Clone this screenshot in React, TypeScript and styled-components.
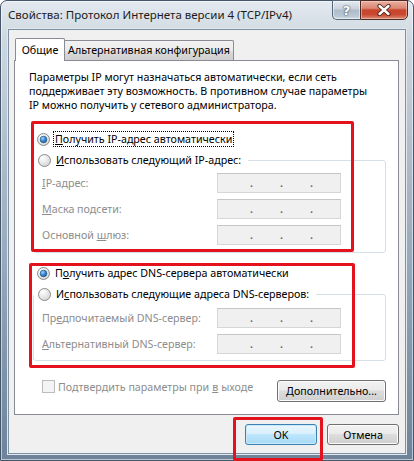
import React from 'react';
import styled, { createGlobalStyle } from 'styled-components';

const GlobalStyle = createGlobalStyle`
  html, body {
    margin: 0;
    padding: 0;
    background: #ffffff;
  }

  body {
    font-family: 'Noto Sans', 'Open Sans', sans-serif;
    font-size: 10.7px;
    color: #000000;
  }

  * {
    box-sizing: border-box;
  }
`;

const Window = styled.div`
  width: 414px;
  height: 461px;
  display: flex;
  flex-direction: column;
  padding: 0 7px 6px 7px;
  border: 1px solid #44566a;
  border-radius: 7px 7px 0 0;
  background: linear-gradient(180deg, #e3e9ef 0%, #cfd8e1 8%, #b2c0ce 30%, #8ea1b5 65%, #6e8399 100%);
  box-shadow: inset 0 0 0 1px rgba(255, 255, 255, 0.55);
`;

const TitleBar = styled.div`
  height: 28px;
  display: flex;
  align-items: flex-start;
  flex-shrink: 0;
`;

const Title = styled.div`
  margin-top: 6px;
  line-height: 16px;
  font-size: 11.5px;
  color: #1b1b1b;
  white-space: nowrap;
`;

const CaptionButtons = styled.div`
  margin-left: auto;
  margin-top: -1px;
  margin-right: -2px;
  display: flex;
`;

const HelpButton = styled.div`
  width: 28px;
  height: 20px;
  border: 1px solid #56677a;
  border-right: none;
  border-radius: 0 0 0 5px;
  background: linear-gradient(180deg, #e4eaf0 0%, #c8d2dc 45%, #aebbc8 50%, #bcc8d4 85%, #d3dce5 100%);
  box-shadow: inset 0 0 0 1px rgba(255, 255, 255, 0.5);
  display: flex;
  align-items: center;
  justify-content: center;
  font-family: 'DejaVu Sans', sans-serif;
  font-weight: bold;
  font-size: 13px;
  color: #ffffff;
  text-shadow: 0 0 1px #3a4a5a, 0 0 2px #3a4a5a;
`;

const CloseButton = styled.div`
  width: 48px;
  height: 20px;
  border: 1px solid #4a2a25;
  border-radius: 0 0 5px 0;
  background: linear-gradient(180deg, #eab0a2 0%, #db8672 40%, #c7452c 50%, #c9482f 75%, #de8a74 100%);
  box-shadow: inset 0 0 0 1px rgba(255, 220, 210, 0.5);
  display: flex;
  align-items: center;
  justify-content: center;
`;

const Client = styled.div`
  flex: 1;
  display: flex;
  flex-direction: column;
  padding: 8px 6px 8px 5px;
  background: #f0f0f0;
  border: 1px solid #7d90a4;
  box-shadow: 0 0 0 1px #e2e8ee;
`;

const TabStrip = styled.div`
  height: 22px;
  display: flex;
  align-items: flex-end;
  padding-left: 1px;
  position: relative;
  z-index: 1;
  flex-shrink: 0;
`;

const Tab = styled.div<{ $active?: boolean; $w: number }>`
  width: ${(p) => p.$w}px;
  height: ${(p) => (p.$active ? '23px' : '20px')};
  margin-bottom: ${(p) => (p.$active ? '-1px' : '0')};
  margin-left: ${(p) => (p.$active ? '0' : '-1px')};
  padding-top: ${(p) => (p.$active ? '3px' : '1px')};
  border: 1px solid #898c95;
  border-bottom: none;
  border-radius: 2px 2px 0 0;
  background: ${(p) => (p.$active ? '#ffffff' : 'linear-gradient(180deg, #f2f2f2 0%, #ebebeb 50%, #dcdcdc 51%, #cfcfcf 100%)')};
  line-height: 16px;
  text-align: center;
  white-space: nowrap;
  order: ${(p) => (p.$active ? 1 : 2)};
  position: relative;
  z-index: ${(p) => (p.$active ? 2 : 1)};
`;

const Panel = styled.div`
  height: 355px;
  display: flex;
  flex-direction: column;
  padding: 9px 12px 12px 0;
  background: #ffffff;
  border: 1px solid #898c95;
  flex-shrink: 0;
`;

const Description = styled.p`
  margin: 0 0 0 14px;
  line-height: 14px;
  white-space: nowrap;
`;

const Section = styled.div<{ $gap: number }>`
  position: relative;
  margin: ${(p) => p.$gap}px 0 0 18px;
  width: 353px;
`;

const RedMark = styled.div<{ $top: number; $left: number; $w: number; $h: number }>`
  position: absolute;
  top: ${(p) => p.$top}px;
  left: ${(p) => p.$left}px;
  width: ${(p) => p.$w}px;
  height: ${(p) => p.$h}px;
  border: 3px solid #e3121c;
  border-radius: 2px;
  pointer-events: none;
  z-index: 3;
`;

const OptionRow = styled.label`
  display: flex;
  align-items: center;
  height: 16px;
  gap: 3px;
  padding-left: 4px;
  white-space: nowrap;
`;

const OptionText = styled.span<{ $focus?: boolean }>`
  padding: 0 1px;
  line-height: 14px;
  border: 1px dotted ${(p) => (p.$focus ? '#000000' : 'transparent')};
`;

const Key = styled.span`
  text-decoration: underline;
  text-underline-offset: 1px;
`;

const GroupBox = styled.fieldset<{ $top: number; $bottom: number }>`
  margin: 5px 0 0 0;
  padding: ${(p) => p.$top}px 0 ${(p) => p.$bottom}px 8px;
  min-width: 0;
  border: 1px solid #d5dfe5;
  border-radius: 3px;
`;

const GroupLegend = styled.legend`
  padding: 0 5px 0 0;
  margin-left: -8px;
  background: #ffffff;
`;

const FieldGrid = styled.div`
  display: grid;
  grid-template-columns: 175px 124px;
  row-gap: 6px;
  align-items: center;
`;

const FieldLabel = styled.span`
  color: #8d8d8d;
  white-space: nowrap;
`;

const IpBox = styled.div`
  height: 20px;
  display: flex;
  align-items: flex-end;
  padding: 0 0 3px 32px;
  background: #f0f0f0;
  border: 1px solid #d6d6d6;
  border-top-color: #c6c6c6;
  line-height: 12px;
  color: #6a6a6a;
`;

const IpDot = styled.span`
  width: 30px;
  font-weight: bold;
`;

const FooterRow = styled.div`
  display: flex;
  align-items: flex-start;
  margin-top: 19px;
  padding-left: 27px;
`;

const CheckLabel = styled.label`
  display: flex;
  align-items: center;
  gap: 3px;
  height: 13px;
  color: #8d8d8d;
  white-space: nowrap;
`;

const CheckBox = styled.span`
  width: 13px;
  height: 13px;
  border: 1px solid #bcbcbc;
  background: #f4f4f4;
`;

const Button = styled.button<{ $primary?: boolean; $w: number; $h: number }>`
  width: ${(p) => p.$w}px;
  height: ${(p) => p.$h}px;
  padding: 0;
  font-family: inherit;
  font-size: 10.7px;
  color: #000000;
  border: 1px solid ${(p) => (p.$primary ? '#3c7fb1' : '#707070')};
  border-radius: 3px;
  background: ${(p) =>
    p.$primary
      ? 'linear-gradient(180deg, #eaf6fd 0%, #d9f0fc 45%, #bee6fd 50%, #a7d9f5 100%)'
      : 'linear-gradient(180deg, #f2f2f2 0%, #ebebeb 45%, #dddddd 50%, #cfcfcf 100%)'};
  box-shadow: inset 0 0 0 1px ${(p) => (p.$primary ? '#c8eafc' : '#fcfcfc')};
`;

const MoreButton = styled(Button)`
  margin-left: auto;
`;

const DialogButtons = styled.div`
  display: flex;
  justify-content: flex-end;
  gap: 10px;
  margin-top: 9px;
`;

const Marked = styled.div`
  position: relative;
  display: flex;
`;

function Radio({ checked }: { checked?: boolean }) {
  return (
    <svg width="13" height="13" viewBox="0 0 13 13">
      <defs>
        <radialGradient id="rFill" cx="0.35" cy="0.3" r="0.8">
          <stop offset="0" stopColor="#ffffff" />
          <stop offset="1" stopColor="#d2d2d2" />
        </radialGradient>
        <radialGradient id="rDot" cx="0.35" cy="0.3" r="0.8">
          <stop offset="0" stopColor="#9fd4fb" />
          <stop offset="0.5" stopColor="#3c8ed8" />
          <stop offset="1" stopColor="#1a4f86" />
        </radialGradient>
      </defs>
      <circle cx="6.5" cy="6.5" r="6" fill="url(#rFill)" stroke="#8a8a8a" />
      {checked && <circle cx="6.5" cy="6.5" r="3.3" fill="url(#rDot)" stroke="#245c8f" strokeWidth="0.8" />}
    </svg>
  );
}

function IpField() {
  return (
    <IpBox>
      <IpDot>.</IpDot>
      <IpDot>.</IpDot>
      <IpDot>.</IpDot>
    </IpBox>
  );
}

export default function App() {
  return (
    <>
      <GlobalStyle />
      <Window>
        <TitleBar>
          <Title>Свойства: Протокол Интернета версии 4 (TCP/IPv4)</Title>
          <CaptionButtons>
            <HelpButton>?</HelpButton>
            <CloseButton>
              <svg width="16" height="12" viewBox="0 0 16 12">
                <path d="M3.5 2 L12.5 10 M12.5 2 L3.5 10" stroke="#4a2018" strokeWidth="4.2" strokeLinecap="round" />
                <path d="M3.5 2 L12.5 10 M12.5 2 L3.5 10" stroke="#ffffff" strokeWidth="2.4" strokeLinecap="round" />
              </svg>
            </CloseButton>
          </CaptionButtons>
        </TitleBar>

        <Client>
          <TabStrip>
            <Tab $active $w={50}>
              Общие
            </Tab>
            <Tab $w={170}>Альтернативная конфигурация</Tab>
          </TabStrip>

          <Panel>
            <Description>
              Параметры IP могут назначаться автоматически, если сеть
              <br />
              поддерживает эту возможность. В противном случае параметры
              <br />
              IP можно получить у сетевого администратора.
            </Description>

            <Section $gap={19}>
              <RedMark $top={-10} $left={-2} $w={323} $h={131} />
              <OptionRow>
                <Radio checked />
                <OptionText $focus>
                  <Key>П</Key>олучить IP-адрес автоматически
                </OptionText>
              </OptionRow>
              <GroupBox $top={5} $bottom={7}>
                <GroupLegend>
                  <OptionRow>
                    <Radio />
                    <OptionText>
                      <Key>И</Key>спользовать следующий IP-адрес:
                    </OptionText>
                  </OptionRow>
                </GroupLegend>
                <FieldGrid>
                  <FieldLabel>
                    <Key>I</Key>P-адрес:
                  </FieldLabel>
                  <IpField />
                  <FieldLabel>
                    <Key>М</Key>аска подсети:
                  </FieldLabel>
                  <IpField />
                  <FieldLabel>
                    Основной <Key>ш</Key>люз:
                  </FieldLabel>
                  <IpField />
                </FieldGrid>
              </GroupBox>
            </Section>

            <Section $gap={12}>
              <RedMark $top={-2} $left={-4} $w={326} $h={105} />
              <OptionRow>
                <Radio checked />
                <OptionText>
                  П<Key>о</Key>лучить адрес DNS-сервера автоматически
                </OptionText>
              </OptionRow>
              <GroupBox $top={6} $bottom={6}>
                <GroupLegend>
                  <OptionRow>
                    <Radio />
                    <OptionText>
                      И<Key>с</Key>пользовать следующие адреса DNS-серверов:
                    </OptionText>
                  </OptionRow>
                </GroupLegend>
                <FieldGrid>
                  <FieldLabel>
                    Пр<Key>е</Key>дпочитаемый DNS-сервер:
                  </FieldLabel>
                  <IpField />
                  <FieldLabel>
                    <Key>А</Key>льтернативный DNS-сервер:
                  </FieldLabel>
                  <IpField />
                </FieldGrid>
              </GroupBox>
            </Section>

            <FooterRow>
              <CheckLabel>
                <CheckBox />
                Подтвердить параметры при <Key>в</Key>ыходе
              </CheckLabel>
              <MoreButton $w={109} $h={22}>
                <Key>Д</Key>ополнительно...
              </MoreButton>
            </FooterRow>
          </Panel>

          <DialogButtons>
            <Marked>
              <Button $primary $w={72} $h={21}>
                OK
              </Button>
              <RedMark $top={-7} $left={-12} $w={90} $h={44} />
            </Marked>
            <Button $w={72} $h={21}>
              Отмена
            </Button>
          </DialogButtons>
        </Client>
      </Window>
    </>
  );
}
